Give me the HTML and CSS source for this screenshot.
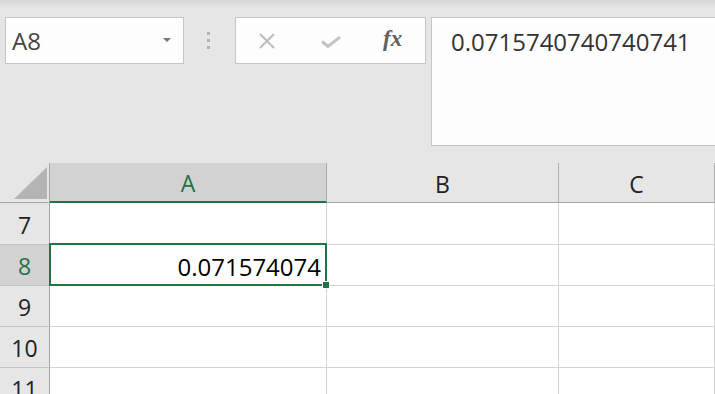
FILE: index.html
```html
<!DOCTYPE html>
<html lang="en">
<head>
    <meta charset="UTF-8">
    <title>Book1 - Excel</title>
    <link rel="stylesheet" href="styles.css">
</head>
<body>
    <div class="toolbar">
        <div class="name-box">
            <span class="name-text">A8</span>
            <span class="caret"></span>
        </div>
        <div class="grip"><i></i><i></i><i></i></div>
        <div class="formula-buttons">
            <svg class="icon-cancel" viewBox="0 0 16 16" width="16" height="16">
                <path d="M1 1 L15 15 M15 1 L1 15" stroke="#bdbdbd" stroke-width="2" fill="none" />
            </svg>
            <svg class="icon-enter" viewBox="0 0 20 12" width="20" height="12">
                <path d="M1 5.5 L7 10.5 L19 1" stroke="#c4c4c4" stroke-width="3" fill="none" />
            </svg>
            <span class="icon-fx">fx</span>
        </div>
        <div class="formula-input">0.0715740740740741</div>
    </div>

    <div class="sheet">
        <div class="corner"><span class="corner-tri"></span></div>
        <div class="col-head active">A</div>
        <div class="col-head">B</div>
        <div class="col-head">C</div>

        <div class="row-head">7</div>
        <div class="cell"></div>
        <div class="cell"></div>
        <div class="cell"></div>

        <div class="row-head active">8</div>
        <div class="cell selected">0.071574074<span class="fill-handle"></span></div>
        <div class="cell"></div>
        <div class="cell"></div>

        <div class="row-head">9</div>
        <div class="cell"></div>
        <div class="cell"></div>
        <div class="cell"></div>

        <div class="row-head">10</div>
        <div class="cell"></div>
        <div class="cell"></div>
        <div class="cell"></div>

        <div class="row-head">11</div>
        <div class="cell"></div>
        <div class="cell"></div>
        <div class="cell"></div>
    </div>
</body>
</html>
```

FILE: styles.css
```css
body {
    margin: 0;
    height: 394px;
    overflow: hidden;
    background: #e6e6e6;
    font-family: 'Open Sans', 'Noto Sans', sans-serif;
    color: #222;
}

/* formula bar */

.toolbar {
    display: flex;
    align-items: flex-start;
    padding: 17px 0 0 5px;
    background: linear-gradient(#d5d5d5 0, #e6e6e6 8px);
}

.name-box {
    box-sizing: border-box;
    width: 179px;
    height: 47px;
    background: #fdfdfd;
    border: 1px solid #c6c6c6;
    display: flex;
    align-items: center;
    justify-content: space-between;
    padding: 0 12px 0 6px;
}

.name-text {
    font-size: 24px;
    color: #444;
    line-height: 1;
}

.caret {
    width: 0;
    height: 0;
    border-left: 4px solid transparent;
    border-right: 4px solid transparent;
    border-top: 4px solid #777;
    margin-top: -2px;
}

.grip {
    display: flex;
    flex-direction: column;
    gap: 4px;
    margin: 15px 25px 0 23px;
}

.grip i {
    display: block;
    width: 3px;
    height: 3px;
    background: #b4b4b4;
}

.formula-buttons {
    box-sizing: border-box;
    width: 191px;
    height: 47px;
    background: #fdfdfd;
    border: 1px solid #c6c6c6;
    display: flex;
    align-items: center;
    padding: 0 0 0 23px;
}

.icon-cancel {
    margin-right: 46px;
}

.icon-enter {
    margin: 2px 42px 0 0;
}

.icon-fx {
    font-family: 'Liberation Serif', serif;
    font-style: italic;
    font-weight: bold;
    font-size: 23px;
    color: #606060;
    margin-top: -4px;
}

.formula-input {
    box-sizing: border-box;
    flex: 1;
    height: 129px;
    margin: 0 -2px 0 5px;
    background: #fdfdfd;
    border: 1px solid #c6c6c6;
    padding: 8px 0 0 19px;
    font-size: 24px;
    color: #333;
    line-height: 32px;
}

/* grid */

.sheet {
    display: grid;
    grid-template-columns: 50px 277px 232px 1fr;
    grid-template-rows: 40px 42px 41px 41px 41px 41px;
    margin-top: 17px;
    background: #fff;
}

.corner,
.col-head,
.row-head {
    box-sizing: border-box;
    background: #e6e6e6;
    display: flex;
    align-items: center;
    justify-content: center;
    font-size: 23px;
    color: #222;
}

.corner {
    border-right: 1px solid #a5a5a5;
    border-bottom: 1px solid #a5a5a5;
    justify-content: flex-end;
    align-items: flex-end;
    padding: 0 2px 3px 0;
}

.corner-tri {
    width: 0;
    height: 0;
    border-left: 33px solid transparent;
    border-bottom: 32px solid #b4b4b4;
}

.col-head {
    border-right: 1px solid #b0b0b0;
    border-bottom: 1px solid #a5a5a5;
    padding-top: 2px;
}

.col-head.active {
    background: #d2d2d2;
    color: #217346;
    border-bottom: 2px solid #217346;
    border-right-color: #ababab;
}

.row-head {
    border-right: 1px solid #a5a5a5;
    border-bottom: 1px solid #c4c4c4;
    padding-top: 2px;
}

.row-head.active {
    background: #d2d2d2;
    color: #217346;
}

.cell {
    box-sizing: border-box;
    border-right: 1px solid #d4d4d4;
    border-bottom: 1px solid #d4d4d4;
    position: relative;
}

.cell.selected {
    display: flex;
    align-items: center;
    justify-content: flex-end;
    padding: 2px 5px 0 0;
    font-size: 24px;
    color: #000;
}

.cell.selected::after {
    content: '';
    position: absolute;
    top: -2px;
    left: -1px;
    right: -1px;
    bottom: -1px;
    border: 2px solid #217346;
}

.fill-handle {
    position: absolute;
    right: -4px;
    bottom: -4px;
    width: 6px;
    height: 6px;
    background: #217346;
    border: 1px solid #fff;
    z-index: 1;
}
```
